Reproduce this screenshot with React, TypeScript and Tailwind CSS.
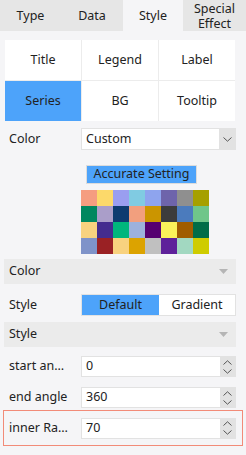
import React from "react";

const font = { fontFamily: '"Noto Sans", "DejaVu Sans", sans-serif' };

const tabs = [
  { name: "Type", w: "w-[61px]" },
  { name: "Data", w: "w-[62px]" },
  { name: "Style", w: "w-[60px]", active: true },
  { name: "Special Effect", w: "w-[63px]" },
];

const cells = ["Title", "Legend", "Label", "Series", "BG", "Tooltip"];

const palette = [
  "#f59d80", "#fcd96a", "#9a9ef0", "#80cbe2", "#8ea4ee", "#6e64ab", "#8f8f8f", "#a6a000",
  "#00875f", "#aa9ec9", "#0d3b70", "#f29f7e", "#cb9500", "#3c3c3c", "#4b7bbd", "#6fc68a",
  "#f8d27f", "#432c8f", "#00b67c", "#9db1dc", "#560070", "#fbf25a", "#a05c00", "#006d48",
  "#7f93c9", "#9a2124", "#f8d27f", "#dca300", "#c0c0c0", "#5e219a", "#a2d8c1", "#cfcc00",
];

function Chevron({ up }: { up?: boolean }) {
  return (
    <svg width="9" height="5" viewBox="0 0 9 5" className="block">
      <path
        d={up ? "M0.5 4.5 L4.5 0.8 L8.5 4.5" : "M0.5 0.5 L4.5 4.2 L8.5 0.5"}
        fill="none"
        stroke="#555"
        strokeWidth="1"
      />
    </svg>
  );
}

function Section({ title }: { title: string }) {
  return (
    <div className="ml-[4px] w-[232px] h-[25px] bg-[#ebebeb] flex items-center justify-between pl-[5px] pr-[8px] text-[12.5px] text-[#222]">
      <span>{title}</span>
      <svg width="9" height="5" viewBox="0 0 9 5">
        <path d="M0 0 L9 0 L4.5 5 Z" fill="#b5b5b5" />
      </svg>
    </div>
  );
}

function NumberRow({ label, value }: { label: string; value: string }) {
  return (
    <div className="flex items-center">
      <div className="w-[81px] pl-[9px] pr-[11px] text-[12.5px] text-[#222] truncate">{label}</div>
      <div className="w-[155px] h-[21px] bg-white border border-[#e2e2e2] flex">
        <div className="flex-1 pl-[4px] text-[12.5px] text-[#222] flex items-center">{value}</div>
        <div className="w-[15px] bg-[#e2e2e2] flex flex-col items-center justify-center gap-[4px]">
          <Chevron up />
          <Chevron />
        </div>
      </div>
    </div>
  );
}

export default function App() {
  return (
    <div className="w-[246px] h-[455px] bg-[#f5f5f7] overflow-hidden" style={font}>
      <div className="flex h-[31px] bg-[#e6e6e6]">
        {tabs.map((t) => (
          <div
            key={t.name}
            className={`${t.w} flex items-center justify-center text-center text-[12.5px] leading-[15px] text-[#222] ${
              t.active ? "bg-[#f5f5f7]" : ""
            }`}
          >
            {t.name === "Special Effect" ? (
              <span>
                Special
                <br />
                Effect
              </span>
            ) : (
              t.name
            )}
          </div>
        ))}
      </div>

      <div className="mt-[9px] ml-[5px] w-[230px] grid grid-cols-3 gap-px bg-[#ececec]">
        {cells.map((c) => (
          <div
            key={c}
            className={`h-[40px] flex items-center justify-center text-[12.5px] text-[#222] ${
              c === "Series" ? "bg-[#4da3fa]" : "bg-white"
            }`}
          >
            {c}
          </div>
        ))}
      </div>

      <div className="mt-[7px] flex items-center">
        <div className="w-[81px] pl-[9px] text-[12.5px] text-[#222]">Color</div>
        <div className="w-[155px] h-[22px] bg-white border border-[#e2e2e2] flex">
          <div className="flex-1 pl-[4px] text-[12.5px] text-[#222] flex items-center">Custom</div>
          <div className="w-[16px] bg-[#e2e2e2] flex items-center justify-center">
            <Chevron />
          </div>
        </div>
      </div>

      <div className="mt-[15px] ml-[86px] w-[111px] h-[19px] border border-[#dcdcdc] bg-[#4da3fa] flex items-center justify-center text-[12.5px] text-[#222] whitespace-nowrap">
        Accurate Setting
      </div>

      <div className="mt-[6px] ml-[81px] w-[128px] grid grid-cols-8">
        {palette.map((c, i) => (
          <div key={i} className="h-[16px]" style={{ backgroundColor: c }} />
        ))}
      </div>

      <div className="mt-[5px]">
        <Section title="Color" />
      </div>

      <div className="mt-[10px] flex items-center">
        <div className="w-[81px] pl-[9px] text-[12.5px] text-[#222]">Style</div>
        <div className="w-[155px] h-[22px] border border-[#e2e2e2] flex text-[12.5px] text-[#222]">
          <div className="w-[77px] bg-[#4da3fa] flex items-center justify-center">Default</div>
          <div className="flex-1 bg-white flex items-center justify-center">Gradient</div>
        </div>
      </div>

      <div className="mt-[6px]">
        <Section title="Style" />
      </div>

      <div className="mt-[9px]">
        <NumberRow label="start angle" value="0" />
      </div>
      <div className="mt-[10px]">
        <NumberRow label="end angle" value="360" />
      </div>
      <div className="mt-[2px] ml-[3px] w-[240px] h-[36px] border border-[#f28b78] flex items-center">
        <div className="-ml-[4px]">
          <NumberRow label="inner Radius" value="70" />
        </div>
      </div>
    </div>
  );
}
